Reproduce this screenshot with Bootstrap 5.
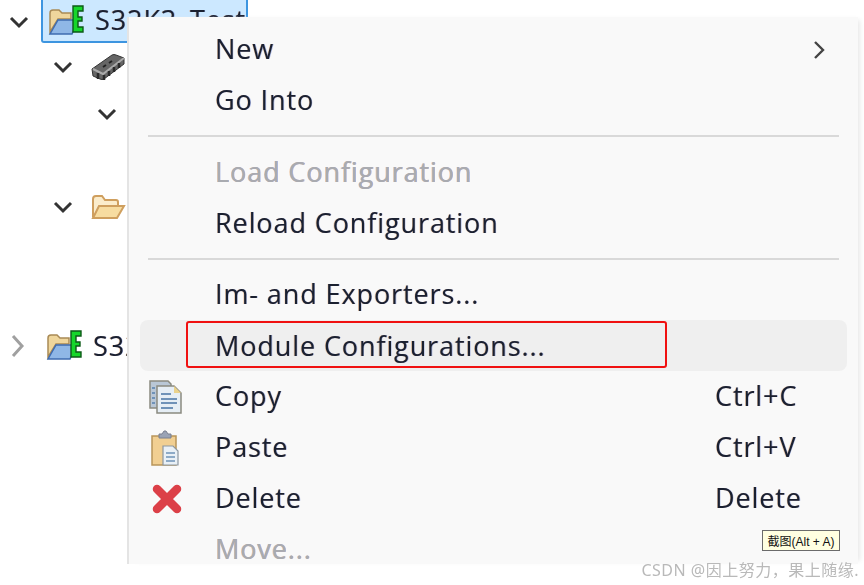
<!DOCTYPE html>
<html lang="en">
<head>
  <meta charset="UTF-8">
  <title>Module Configurations</title>
  <link href="https://cdn.jsdelivr.net/npm/bootstrap@5.3.0/dist/css/bootstrap.min.css" rel="stylesheet">
  <style>
    html, body { height: 100%; overflow: hidden; background: #fff; }
    body { font-family: "Open Sans", "Liberation Sans", sans-serif; color: #1a2030; }
    .shot { width: 864px; height: 585px; overflow: hidden; }
    .shot-inner { filter: blur(.7px); width: 864px; height: 585px; }

    .tree-row { height: 46.5px; font-size: 27px; letter-spacing: .9px; text-shadow: .6px 0 0 rgba(20,60,190,.35), -.6px 0 0 rgba(230,120,20,.35); }
    .tree-row.first { height: 43px; margin-bottom: 1px; }
    .lvl0 { padding-left: 8px; }
    .lvl1 { padding-left: 52px; }
    .lvl2 { padding-left: 96px; }
    .tw { width: 22px; height: 14px; flex: none; }
    .tw-side { height: 22px; }
    .tree-sel { margin-left: 11px; width: 207px; height: 43px; background: #cce8ff; border: 2px solid #3d95e0; border-top: 0; border-radius: 0 0 3px 3px; padding-left: 5px; }
    .tree-lbl { margin-left: 10px; }
    .ico-folder { width: 37px; height: 32px; flex: none; }
    .ico-gap { margin-left: 16px; }

    .ctx { top: 17px; left: 127px; width: 731px; height: 547px; overflow: hidden; background: #f9f9f9; border: 0; border-left: 2px solid #e4e4e4; border-radius: 0; padding: 7px 11px 0 11px; margin: 0; font-size: 27px; letter-spacing: .9px; text-shadow: .6px 0 0 rgba(20,60,190,.35), -.6px 0 0 rgba(230,120,20,.35); box-shadow: 5px 0 5px -3px #e8e8e8; }
    .ctx-item { height: 51px; padding: 0; color: #1a2030; border-radius: 8px; }
    .ctx-item.hot, .ctx-item.hot:hover { background: #efefef; color: #1a2030; }
    .ctx-item:hover { background: transparent; color: #1a2030; }
    .ctx-item.disabled { color: #a9abb0; }
    .ctx-item.tail { height: 29px; margin-top: 10px; line-height: 29px; }
    .ctx-ico { width: 46px; flex: none; padding-left: 8px; }
    .ctx-lbl { width: 529px; flex: none; padding-left: 29px; }
    .ctx-lbl.boxed { width: 481px; height: 47px; border: 2px solid #f01010; border-radius: 3px; margin-right: 48px; padding-left: 27px; padding-top: 3px; margin-top: 1px; margin-bottom: 3px; }
    .ctx-key { flex: none; }
    .ctx-arrow { width: 14px; height: 22px; margin-left: 97px; }
    .ctx-sep { margin: 8.5px 8px 10px 8px; border-top: 2px solid #d9d9d9; opacity: 1; }
    .ctx-sep.low { margin-top: 9.5px; margin-bottom: 9px; }

    .tip { right: 24px; top: 530px; height: 21px; width: 78px; z-index: 1100; background: #ffffe1; border: 1px solid #6b6b6b; font: 12px "Liberation Sans", "Noto Sans CJK SC", sans-serif; color: #111; white-space: nowrap; }
    .wmark { right: 5px; top: 558px; z-index: 1100; font: 16px/24px "Noto Sans", "Noto Sans CJK SC", sans-serif; letter-spacing: .5px; color: #b9b9b9; white-space: nowrap; }
  </style>
</head>
<body>
  <div class="shot position-relative">
    <div class="shot-inner">
      <!-- tree behind the menu -->
      <div>
        <div class="tree-row first lvl0 d-flex align-items-center">
          <svg class="tw" viewBox="0 0 22 14"><path d="M3 3l8 8 8-8" fill="none" stroke="#333" stroke-width="3"/></svg>
          <div class="tree-sel d-flex align-items-center">
            <svg class="ico-folder" viewBox="0 0 37 32"><path d="M2 27V8q0-3 3-3h6l3 3h9v6H10z" fill="#efd69c" stroke="#a98a55" stroke-width="1.5"/><path d="M2 29l8-14h20l-6 14z" fill="#8fb7e6" stroke="#3f6cb0" stroke-width="1.5"/><path d="M25 1h10v5h-5v6h4v4h-4v6h5v5H25z" fill="#16d62a" stroke="#0d5a18" stroke-width="1.4"/></svg>
            <span class="tree-lbl">S32K3_Test</span>
          </div>
        </div>
        <div class="tree-row lvl1 d-flex align-items-center">
          <svg class="tw" viewBox="0 0 22 14"><path d="M3 3l8 8 8-8" fill="none" stroke="#333" stroke-width="3"/></svg>
          <svg class="ico-gap" width="36" height="28" viewBox="0 0 36 28"><path d="M2 16L22 2q2-1 4 0l8 3v6L14 26q-2 1-4 0l-7-3z" fill="#666" stroke="#333" stroke-width="1"/><path d="M3 16l10 5L34 5" fill="none" stroke="#aaa" stroke-width="2"/><path d="M8 20v6m6-4v5m5-9v5m5-9v5m5-9v5" stroke="#2a2a2a" stroke-width="2.5"/><path d="M13 14l3-2m3-2l3-2" stroke="#222" stroke-width="2"/></svg>
        </div>
        <div class="tree-row lvl2 d-flex align-items-center">
          <svg class="tw" viewBox="0 0 22 14"><path d="M3 3l8 8 8-8" fill="none" stroke="#333" stroke-width="3"/></svg>
        </div>
        <div class="tree-row"></div>
        <div class="tree-row lvl1 d-flex align-items-center">
          <svg class="tw" viewBox="0 0 22 14"><path d="M3 3l8 8 8-8" fill="none" stroke="#333" stroke-width="3"/></svg>
          <svg class="ico-gap" width="36" height="26" viewBox="0 0 36 26"><path d="M3 23V5q0-3 3-3h6l3 4h11q2 0 2 2v4" fill="#fbeccb" stroke="#cf9f5e" stroke-width="2"/><path d="M3 24l6-12h25l-7 12z" fill="#f7dca0" stroke="#cf9f5e" stroke-width="2"/></svg>
        </div>
        <div class="tree-row"></div>
        <div class="tree-row"></div>
        <div class="tree-row lvl0 d-flex align-items-center">
          <svg class="tw tw-side" viewBox="0 0 22 22"><path d="M5 1l9 10-9 10" fill="none" stroke="#a0a0a0" stroke-width="3"/></svg>
          <div class="d-flex align-items-center ms-2 ps-2">
            <svg class="ico-folder" viewBox="0 0 37 32"><path d="M2 27V8q0-3 3-3h6l3 3h9v6H10z" fill="#efd69c" stroke="#a98a55" stroke-width="1.5"/><path d="M2 29l8-14h20l-6 14z" fill="#8fb7e6" stroke="#3f6cb0" stroke-width="1.5"/><path d="M25 1h10v5h-5v6h4v4h-4v6h5v5H25z" fill="#16d62a" stroke="#0d5a18" stroke-width="1.4"/></svg>
            <span class="tree-lbl">S32K3</span>
          </div>
        </div>
      </div>

      <!-- context menu -->
      <ul class="dropdown-menu show ctx">
        <li><a class="dropdown-item ctx-item d-flex align-items-center"><span class="ctx-ico"></span><span class="ctx-lbl">New</span><svg class="ctx-arrow" viewBox="0 0 14 22"><path d="M3 3l8 8-8 8" fill="none" stroke="#444" stroke-width="2.4"/></svg></a></li>
        <li><a class="dropdown-item ctx-item d-flex align-items-center"><span class="ctx-ico"></span><span class="ctx-lbl">Go Into</span></a></li>
        <li><hr class="ctx-sep"></li>
        <li><a class="dropdown-item ctx-item disabled d-flex align-items-center"><span class="ctx-ico"></span><span class="ctx-lbl">Load Configuration</span></a></li>
        <li><a class="dropdown-item ctx-item d-flex align-items-center"><span class="ctx-ico"></span><span class="ctx-lbl">Reload Configuration</span></a></li>
        <li><hr class="ctx-sep low"></li>
        <li><a class="dropdown-item ctx-item d-flex align-items-center"><span class="ctx-ico"></span><span class="ctx-lbl">Im- and Exporters...</span></a></li>
        <li><a class="dropdown-item ctx-item hot d-flex align-items-center"><span class="ctx-ico"></span><span class="ctx-lbl boxed d-flex align-items-center">Module Configurations...</span></a></li>
        <li><a class="dropdown-item ctx-item d-flex align-items-center">
          <span class="ctx-ico d-flex"><svg width="36" height="36" viewBox="0 0 36 36"><path d="M2 2h18l3 3v24H2z" fill="#b9c7d6" stroke="#8b8b80" stroke-width="1.5"/><path d="M9 7h17l7 7v20H9z" fill="#e6eef5" stroke="#8b8b80" stroke-width="1.5"/><path d="M26 7l7 7h-7z" fill="#e9d28c"/><path d="M13 15h10m-10 5h16m-16 4h16m-16 5h12M4 9h3m-3 5h3m-3 5h3m-3 5h3" stroke="#6f92b8" stroke-width="2"/></svg></span>
          <span class="ctx-lbl">Copy</span><span class="ctx-key">Ctrl+C</span></a></li>
        <li><a class="dropdown-item ctx-item d-flex align-items-center">
          <span class="ctx-ico d-flex"><svg width="36" height="36" viewBox="0 0 36 36"><path d="M4 6h24v29H4z" fill="#f1cf92" stroke="#b8955a" stroke-width="1.5"/><path d="M11 7V4h3l2-3h2l2 3h3v4H11z" fill="#9aa3b5" stroke="#7b8090"/><path d="M15 16h10l5 5v14H15z" fill="#e9f0f6" stroke="#8d97a0" stroke-width="1.2"/><path d="M18 23h9m-9 4h9m-9 4h9" stroke="#6f92b8" stroke-width="1.6"/></svg></span>
          <span class="ctx-lbl">Paste</span><span class="ctx-key">Ctrl+V</span></a></li>
        <li><a class="dropdown-item ctx-item d-flex align-items-center">
          <span class="ctx-ico d-flex"><svg width="36" height="34" viewBox="0 0 36 34"><path d="M9 7l20 20M29 7L9 27" stroke="#dc4048" stroke-width="8.5" stroke-linecap="round"/></svg></span>
          <span class="ctx-lbl">Delete</span><span class="ctx-key">Delete</span></a></li>
        <li><a class="dropdown-item ctx-item tail disabled d-flex align-items-center"><span class="ctx-ico"></span><span class="ctx-lbl">Move...</span></a></li>
      </ul>

      <div class="tip position-absolute d-flex align-items-center justify-content-center">截图(Alt + A)</div>
      <div class="wmark position-absolute">CSDN @因上努力，果上随缘.</div>
    </div>
  </div>
  <script src="https://cdn.jsdelivr.net/npm/bootstrap@5.3.0/dist/js/bootstrap.bundle.min.js"></script>
</body>
</html>
